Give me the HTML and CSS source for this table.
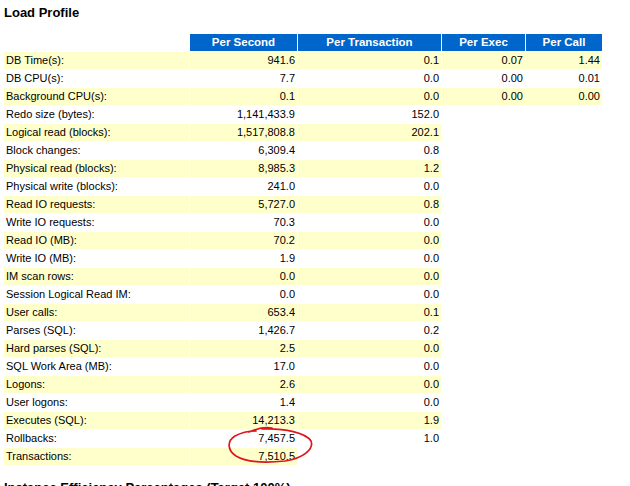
FILE: index.html
```html
<!DOCTYPE html>
<html>
<head>
<meta charset="utf-8">
<link rel="stylesheet" href="styles.css">
</head>
<body>
<div class="page">
<h2 class="title">Load Profile</h2>
<table class="lp">
<thead>
<tr><th class="blank c-label"></th><th class="c-sec">Per Second</th><th class="c-txn">Per Transaction</th><th class="c-exec">Per Exec</th><th class="c-call">Per Call</th></tr>
</thead>
<tbody>
<tr class="odd"><td class="lbl">DB Time(s):</td><td>941.6</td><td>0.1</td><td>0.07</td><td>1.44</td></tr>
<tr><td class="lbl">DB CPU(s):</td><td>7.7</td><td>0.0</td><td>0.00</td><td>0.01</td></tr>
<tr class="odd"><td class="lbl">Background CPU(s):</td><td>0.1</td><td>0.0</td><td>0.00</td><td>0.00</td></tr>
<tr><td class="lbl">Redo size (bytes):</td><td>1,141,433.9</td><td>152.0</td><td class="e"></td><td class="e"></td></tr>
<tr class="odd"><td class="lbl">Logical read (blocks):</td><td>1,517,808.8</td><td>202.1</td><td class="e"></td><td class="e"></td></tr>
<tr><td class="lbl">Block changes:</td><td>6,309.4</td><td>0.8</td><td class="e"></td><td class="e"></td></tr>
<tr class="odd"><td class="lbl">Physical read (blocks):</td><td>8,985.3</td><td>1.2</td><td class="e"></td><td class="e"></td></tr>
<tr><td class="lbl">Physical write (blocks):</td><td>241.0</td><td>0.0</td><td class="e"></td><td class="e"></td></tr>
<tr class="odd"><td class="lbl">Read IO requests:</td><td>5,727.0</td><td>0.8</td><td class="e"></td><td class="e"></td></tr>
<tr><td class="lbl">Write IO requests:</td><td>70.3</td><td>0.0</td><td class="e"></td><td class="e"></td></tr>
<tr class="odd"><td class="lbl">Read IO (MB):</td><td>70.2</td><td>0.0</td><td class="e"></td><td class="e"></td></tr>
<tr><td class="lbl">Write IO (MB):</td><td>1.9</td><td>0.0</td><td class="e"></td><td class="e"></td></tr>
<tr class="odd"><td class="lbl">IM scan rows:</td><td>0.0</td><td>0.0</td><td class="e"></td><td class="e"></td></tr>
<tr><td class="lbl">Session Logical Read IM:</td><td>0.0</td><td>0.0</td><td class="e"></td><td class="e"></td></tr>
<tr class="odd"><td class="lbl">User calls:</td><td>653.4</td><td>0.1</td><td class="e"></td><td class="e"></td></tr>
<tr><td class="lbl">Parses (SQL):</td><td>1,426.7</td><td>0.2</td><td class="e"></td><td class="e"></td></tr>
<tr class="odd"><td class="lbl">Hard parses (SQL):</td><td>2.5</td><td>0.0</td><td class="e"></td><td class="e"></td></tr>
<tr><td class="lbl">SQL Work Area (MB):</td><td>17.0</td><td>0.0</td><td class="e"></td><td class="e"></td></tr>
<tr class="odd"><td class="lbl">Logons:</td><td>2.6</td><td>0.0</td><td class="e"></td><td class="e"></td></tr>
<tr><td class="lbl">User logons:</td><td>1.4</td><td>0.0</td><td class="e"></td><td class="e"></td></tr>
<tr class="odd"><td class="lbl">Executes (SQL):</td><td>14,213.3</td><td>1.9</td><td class="e"></td><td class="e"></td></tr>
<tr><td class="lbl">Rollbacks:</td><td>7,457.5</td><td>1.0</td><td class="e"></td><td class="e"></td></tr>
<tr class="odd"><td class="lbl">Transactions:</td><td>7,510.5</td><td class="e"></td><td class="e"></td><td class="e"></td></tr>
</tbody>
</table>
<h2 class="title next">Instance Efficiency Percentages (Target 100%)</h2>
<svg class="mark" width="630" height="486" viewBox="0 0 630 486">
<path d="M249 432 C258 428 266 427 272 428 M262 429 C285 428 306 433 311 441 C314 449 304 458 285 461 C266 463 246 462 236 456 C227 450 227 441 235 436 C242 432 250 431 256 431" fill="none" stroke="#e0141a" stroke-width="1.7" stroke-linecap="round"/>
</svg>
</div>
</body>
</html>
```
FILE: styles.css
```css
html, body {
  margin: 0;
  padding: 0;
  background: #fff;
}
.page {
  position: relative;
  width: 630px;
  height: 486px;
  overflow: hidden;
  padding: 0 3px;
  box-sizing: border-box;
  font-family: "Liberation Sans", Arial, sans-serif;
}
.title {
  margin: 0;
  padding: 5px 0 0 1px;
  font-size: 13px;
  line-height: 15px;
  font-weight: bold;
  color: #000;
}
.title.next {
  padding-top: 14px;
}
.lp {
  margin-top: 13px;
  border-collapse: separate;
  border-spacing: 1px;
  font-size: 11px;
}
.c-label { width: 185px; }
.c-sec { width: 107px; }
.c-txn { width: 143px; }
.c-exec { width: 83px; }
.c-call { width: 76px; }
.lp th {
  box-sizing: border-box;
  background: #0066cc;
  color: #fff;
  font-weight: bold;
  font-size: 11.5px;
  height: 17px;
  line-height: 17px;
  padding: 0;
  text-align: center;
}
.lp th.blank {
  background: transparent;
}
.lp td {
  height: 17px;
  line-height: 17px;
  padding: 0 2px;
  box-sizing: border-box;
  text-align: right;
  color: #000;
  white-space: nowrap;
}
.lp td.lbl {
  text-align: left;
}
.lp tr.odd td {
  background: #ffffcc;
}
.lp tr.odd td.e {
  background: transparent;
}
.mark {
  position: absolute;
  left: 0;
  top: 0;
  pointer-events: none;
}
```
